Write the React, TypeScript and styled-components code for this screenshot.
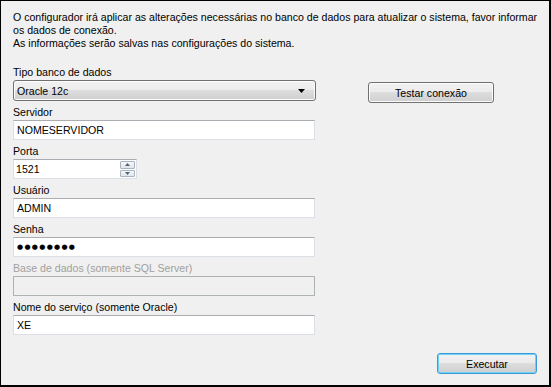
import React from "react";
import styled, { createGlobalStyle } from "styled-components";

const GlobalStyle = createGlobalStyle`
  html, body {
    margin: 0;
    padding: 0;
    background: #f0f0f0;
  }
  * {
    box-sizing: border-box;
  }
`;

const App: React.FC = () => {
  return (
    <>
      <GlobalStyle />
      <StyledWindow>
        <Intro>
          <p>
            O configurador irá aplicar as alterações necessárias no banco de dados para atualizar o sistema, favor informar
            <br />
            os dados de conexão.
          </p>
          <p>As informações serão salvas nas configurações do sistema.</p>
        </Intro>

        <TopRow>
          <Field>
            <Label>Tipo banco de dados</Label>
            <Combo>
              <span>Oracle 12c</span>
              <svg width="7" height="4" viewBox="0 0 7 4">
                <path d="M0 0h7L3.5 4z" fill="#000" />
              </svg>
            </Combo>
          </Field>
          <Button $width={126}>Testar conexão</Button>
        </TopRow>

        <Field>
          <Label>Servidor</Label>
          <TextBox readOnly value="NOMESERVIDOR" />
        </Field>

        <Field>
          <Label>Porta</Label>
          <Spin>
            <SpinInput readOnly value="1521" />
            <SpinButtons>
              <SpinButton>
                <svg width="5" height="3" viewBox="0 0 5 3">
                  <path d="M2.5 0L5 3H0z" fill="#4d6185" />
                </svg>
              </SpinButton>
              <SpinButton>
                <svg width="5" height="3" viewBox="0 0 5 3">
                  <path d="M0 0h5L2.5 3z" fill="#4d6185" />
                </svg>
              </SpinButton>
            </SpinButtons>
          </Spin>
        </Field>

        <Field>
          <Label>Usuário</Label>
          <TextBox readOnly value="ADMIN" />
        </Field>

        <Field>
          <Label>Senha</Label>
          <TextBox readOnly value="●●●●●●●●" $dots />
        </Field>

        <Field>
          <Label $disabled>Base de dados (somente SQL Server)</Label>
          <TextBox readOnly disabled value="" />
        </Field>

        <Field>
          <Label>Nome do serviço (somente Oracle)</Label>
          <TextBox readOnly value="XE" />
        </Field>

        <Footer>
          <Button $width={100} $focused>
            Executar
          </Button>
        </Footer>
      </StyledWindow>
    </>
  );
};

const StyledWindow = styled.div`
  width: 551px;
  height: 387px;
  border-top: 1px solid #000;
  border-left: 1px solid #000;
  border-right: 2px solid #000;
  border-bottom: 2px solid #000;
  padding: 10px 12px 0 12px;
  background: #f0f0f0;
  font-family: "Liberation Sans", Arial, sans-serif;
  font-size: 10.6px;
  color: #000;
  display: flex;
  flex-direction: column;
`;

const Intro = styled.div`
  line-height: 13px;
  margin-bottom: 14px;
  white-space: nowrap;

  p {
    margin: 0;
  }
`;

const TopRow = styled.div`
  display: flex;
  align-items: flex-end;
  gap: 53px;
`;

const Field = styled.div`
  display: flex;
  flex-direction: column;
  width: 302px;
  margin-bottom: 3px;
`;

const Label = styled.div<{ $disabled?: boolean }>`
  height: 16px;
  line-height: 16px;
  color: ${p => (p.$disabled ? "#a0a0a0" : "#000")};
  white-space: nowrap;
`;

const Combo = styled.div`
  height: 21px;
  width: 303px;
  border: 1px solid #707070;
  border-radius: 3px;
  box-shadow: inset 0 0 0 1px #fcfcfc;
  background: linear-gradient(#f2f2f2 0%, #ebebeb 50%, #dddddd 50%, #cfcfcf 100%);
  display: flex;
  align-items: center;
  justify-content: space-between;
  padding: 0 10px 0 3px;
`;

const TextBox = styled.input<{ $dots?: boolean }>`
  display: block;
  width: 302px;
  height: 20px;
  margin: 0;
  padding: 0 3px;
  border: 1px solid #dbdfe6;
  border-top-color: #abadb3;
  background: #fff;
  font-family: ${p => (p.$dots ? '"DejaVu Sans", sans-serif' : '"Liberation Sans", Arial, sans-serif')};
  font-size: ${p => (p.$dots ? "7px" : "10.6px")};
  letter-spacing: ${p => (p.$dots ? "1.3px" : "0")};
  color: #000;
  outline: none;

  &:disabled {
    background: #f0f0f0;
    border-color: #adb2b5;
  }
`;

const Spin = styled.div`
  width: 124px;
  height: 20px;
  border: 1px solid #dbdfe6;
  border-top-color: #abadb3;
  background: #fff;
  display: flex;
  align-items: stretch;
`;

const SpinInput = styled.input`
  flex: 1;
  min-width: 0;
  border: none;
  margin: 0;
  padding: 0 2px;
  font-family: "Liberation Sans", Arial, sans-serif;
  font-size: 10.6px;
  color: #000;
  background: transparent;
  outline: none;
`;

const SpinButtons = styled.div`
  width: 16px;
  display: flex;
  flex-direction: column;
  padding: 1px 1px 1px 0;
  gap: 1px;
`;

const SpinButton = styled.div`
  flex: 1;
  border: 1px solid #a9b3c2;
  border-radius: 1px;
  background: linear-gradient(#f5f6f8, #e1e5ea);
  display: flex;
  align-items: center;
  justify-content: center;
`;

const Button = styled.div<{ $width: number; $focused?: boolean }>`
  width: ${p => p.$width}px;
  height: 21px;
  margin-bottom: 1px;
  border: 1px solid ${p => (p.$focused ? "#3c9ad8" : "#707070")};
  border-radius: 3px;
  box-shadow: inset 0 0 0 1px ${p => (p.$focused ? "#6fd3f7" : "#fcfcfc")};
  background: linear-gradient(#f2f2f2 0%, #ebebeb 50%, #dddddd 50%, #cfcfcf 100%);
  display: flex;
  align-items: center;
  justify-content: center;
  white-space: nowrap;
`;

const Footer = styled.div`
  display: flex;
  justify-content: flex-end;
  margin-top: 15px;
`;

export default App;
